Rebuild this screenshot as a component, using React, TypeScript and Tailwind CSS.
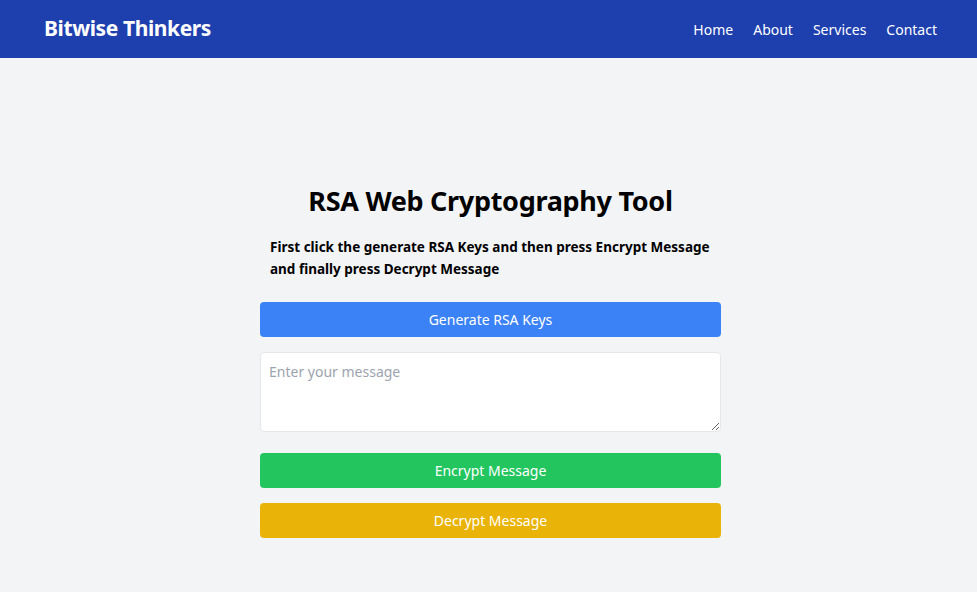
import { useState } from 'react'

const navLinks = ['Home', 'About', 'Services', 'Contact']

const App = () => {
  const [message, setMessage] = useState('')

  return (
    <div className="min-h-screen bg-[#f3f4f6] font-['Noto_Sans',sans-serif]">
      <header className="h-[58px] bg-[#1e40af] flex items-center justify-between pl-[44px] pr-[40px]">
        <div className="text-white text-[21px] font-bold tracking-[-0.4px]">Bitwise Thinkers</div>
        <nav className="flex gap-[20px]">
          {navLinks.map((link) => (
            <a key={link} href="#" className="text-white text-[14px]">
              {link}
            </a>
          ))}
        </nav>
      </header>

      <main className="flex justify-center pt-[125px] pb-10 pl-[4px]">
        <div className="w-[461px] flex flex-col">
          <h1 className="text-[27px] leading-[36px] font-bold text-black text-center mb-[18px] tracking-[-0.3px]">
            RSA Web Cryptography Tool
          </h1>
          <p className="px-[10px] text-[13.5px] leading-[21.5px] font-bold text-black mb-[22px]">
            First click the generate RSA Keys and then press Encrypt Message and finally press Decrypt Message
          </p>
          <button className="h-[35px] w-full rounded bg-[#3b82f6] text-white text-[14px] mb-[15px]">
            Generate RSA Keys
          </button>
          <textarea
            value={message}
            onChange={(e) => setMessage(e.target.value)}
            placeholder="Enter your message"
            className="h-[80px] w-full block rounded border border-[#e5e7eb] bg-white px-2 py-2 text-[14px] placeholder:text-[#9ca3af] mb-[21px] outline-none"
          />
          <button className="h-[35px] w-full rounded bg-[#22c55e] text-white text-[14px] mb-[15px]">
            Encrypt Message
          </button>
          <button className="h-[35px] w-full rounded bg-[#eab308] text-white text-[14px]">
            Decrypt Message
          </button>
        </div>
      </main>
    </div>
  )
}

export default App
